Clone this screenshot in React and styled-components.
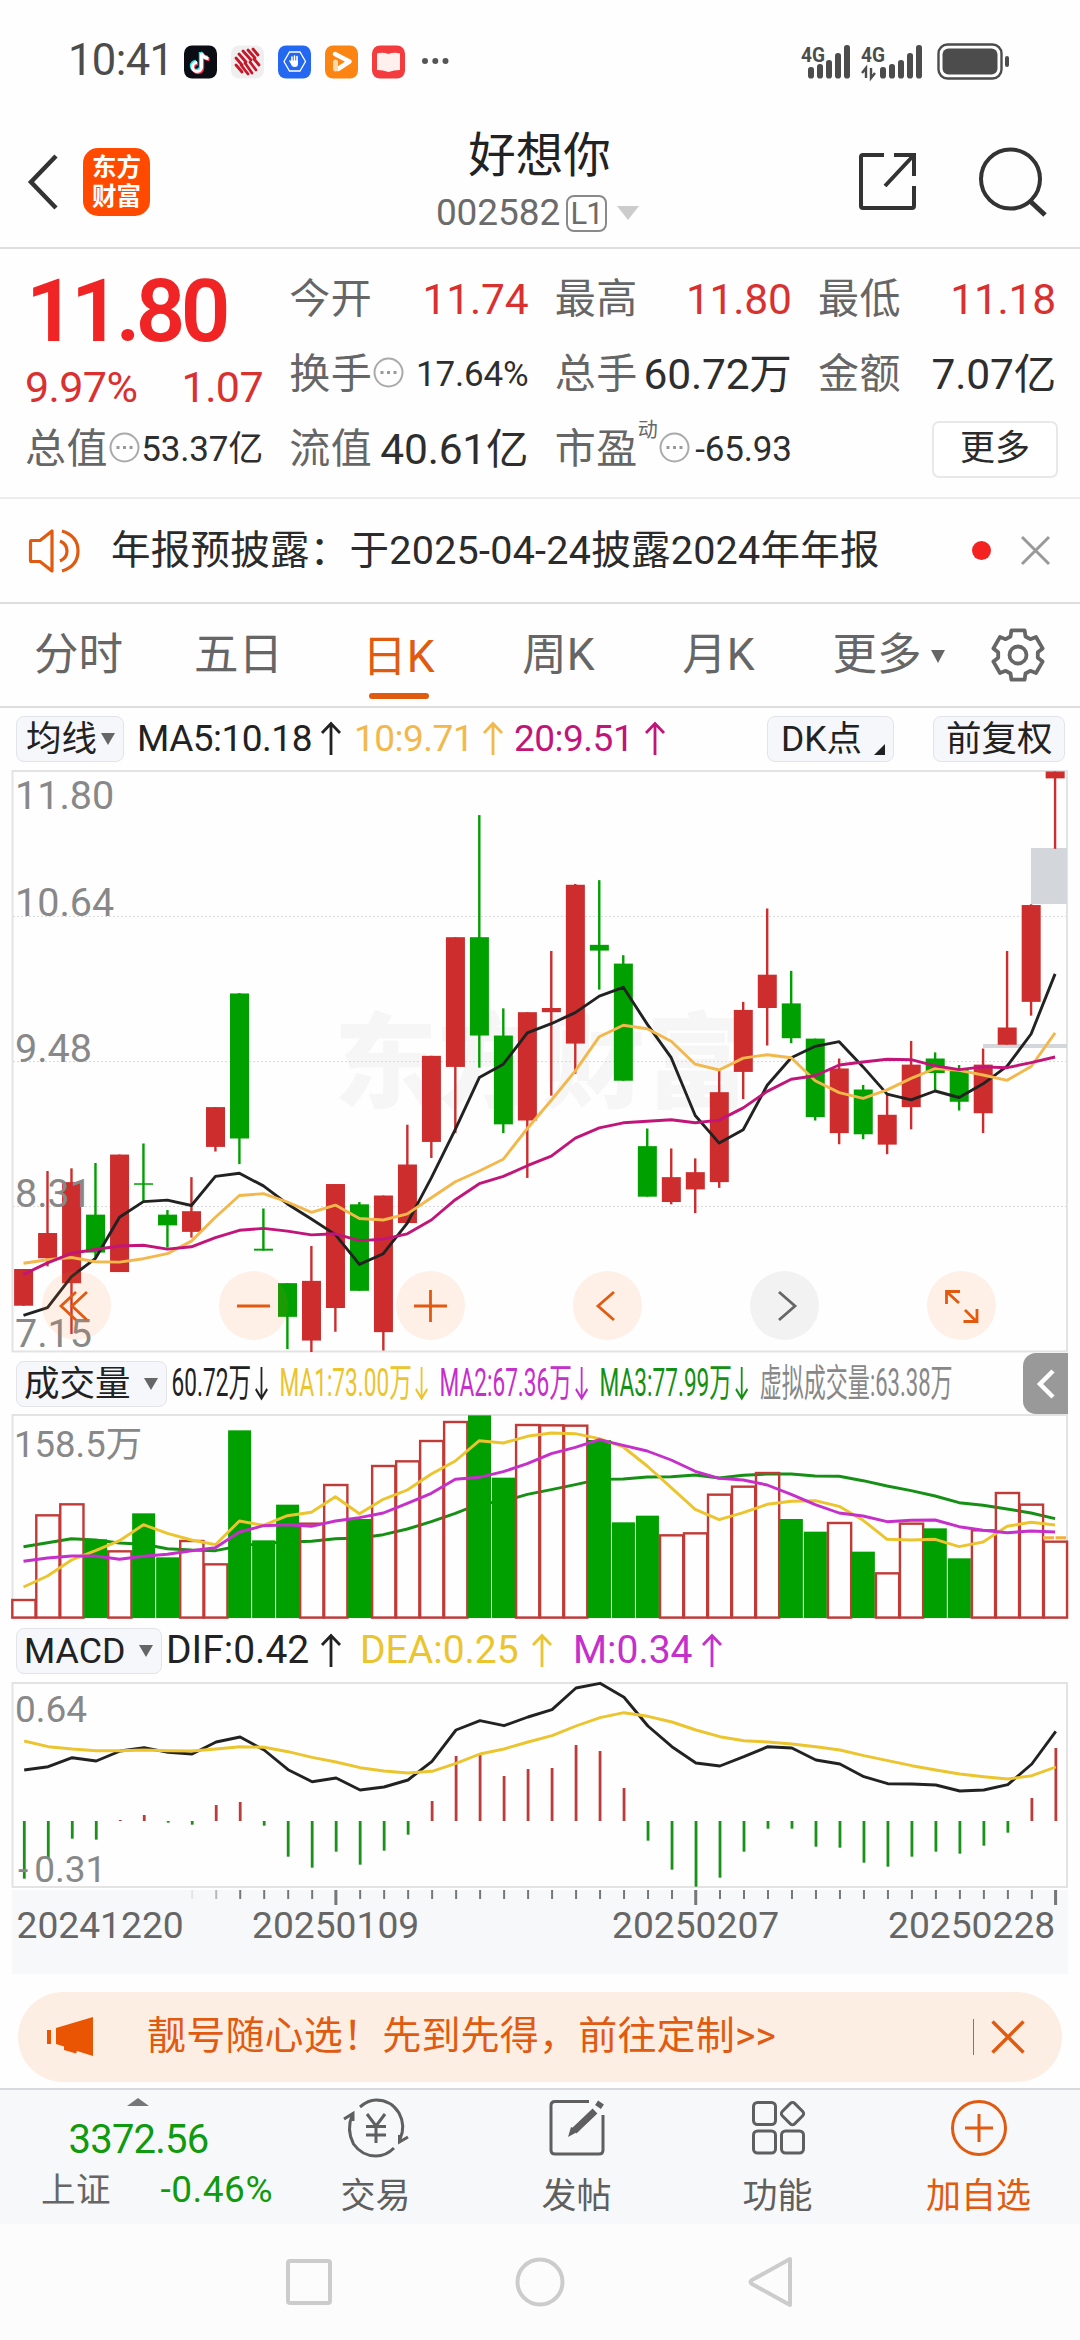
import styled, { createGlobalStyle } from "styled-components";

const GlobalStyle = createGlobalStyle`
    * {
        box-sizing: border-box;
    }
    body {
        margin: 0;
        background: #fefefe;
        font-family: Roboto, "Noto Sans CJK SC", sans-serif;
        line-height: 1.2;
        color: #2b2b2b;
    }
    svg {
        display: block;
        flex-shrink: 0;
        overflow: visible;
    }
`;

const RED = "#cd2d2d";
const GREEN = "#00a000";
const ORANGE = "#e05a10";

// one row per day: [up, high, bodyTop, bodyBottom, low]
const candles = [
    [1, 1330, 1330, 1426, 1426], [1, 1074, 1236, 1302, 1323], [1, 1067, 1103, 1367, 1500], [0, 1053, 1188, 1287, 1302],
    [1, 1031, 1031, 1338, 1338], [0, 1002, 1106, 1109, 1152], [0, 1176, 1188, 1216, 1274], [1, 1090, 1179, 1233, 1248],
    [1, 907, 907, 1011, 1023], [0, 609, 610, 989, 1056], [0, 1172, 1277, 1282, 1282], [0, 1367, 1367, 1455, 1539],
    [1, 1270, 1361, 1517, 1547], [1, 1108, 1108, 1432, 1494], [0, 1155, 1161, 1387, 1387], [1, 1138, 1138, 1495, 1543],
    [1, 953, 1057, 1210, 1210], [1, 773, 773, 998, 1040], [1, 463, 463, 802, 975], [0, 144, 463, 720, 804],
    [0, 649, 720, 952, 975], [1, 659, 659, 942, 1092], [1, 499, 648, 659, 877], [1, 324, 326, 741, 820],
    [0, 314, 483, 498, 600], [0, 510, 532, 838, 838], [0, 963, 1009, 1141, 1141], [1, 1015, 1090, 1155, 1161],
    [1, 1041, 1077, 1122, 1184], [1, 812, 868, 1103, 1118], [1, 632, 653, 815, 886], [1, 388, 561, 648, 746],
    [0, 551, 636, 727, 740], [0, 728, 728, 933, 942], [1, 780, 806, 975, 1004], [0, 849, 861, 978, 991],
    [1, 875, 927, 1005, 1030], [1, 734, 796, 907, 965], [0, 764, 780, 818, 866], [0, 797, 810, 893, 916],
    [1, 754, 796, 923, 975], [1, 499, 699, 744, 744], [1, 377, 379, 632, 668], [1, 30, 30, 48, 232],
];
const ma5 = [1451, 1431, 1350, 1302, 1195, 1154, 1150, 1164, 1088, 1080, 1113, 1160, 1199, 1240, 1318, 1290, 1210, 1092, 965, 830, 795, 713, 689, 660, 617, 594, 690, 778, 929, 1001, 966, 850, 778, 748, 736, 802, 873, 888, 865, 882, 846, 800, 716, 559];
const ma10 = [1315, 1306, 1300, 1311, 1312, 1303, 1290, 1257, 1195, 1138, 1133, 1155, 1182, 1163, 1198, 1202, 1186, 1144, 1102, 1074, 1043, 963, 889, 812, 723, 693, 702, 735, 795, 810, 779, 770, 778, 838, 869, 884, 862, 832, 806, 811, 823, 837, 801, 713];
const ma20 = [1344, 1314, 1289, 1279, 1270, 1268, 1278, 1272, 1248, 1229, 1224, 1231, 1241, 1238, 1256, 1252, 1238, 1202, 1149, 1107, 1088, 1060, 1035, 988, 961, 948, 944, 940, 948, 941, 909, 866, 834, 825, 797, 789, 782, 783, 799, 809, 802, 804, 791, 776];

const volumes = [777, 523, 490, 598, 631, 520, 652, 600, 670, 271, 601, 494, 548, 432, 537, 375, 361, 300, 243, 226, 413, 252, 253, 254, 300, 547, 527, 583, 577, 461, 437, 396, 537, 575, 546, 635, 697, 548, 565, 655, 568, 456, 491, 602];
const vol1 = [741, 708, 660, 632, 602, 554, 580, 600, 614, 543, 556, 527, 517, 470, 521, 478, 450, 402, 363, 302, 309, 289, 279, 281, 296, 321, 378, 443, 508, 539, 518, 493, 484, 482, 499, 541, 598, 600, 598, 620, 606, 559, 547, 555];
const vol2 = [664, 654, 648, 648, 658, 649, 643, 632, 623, 576, 557, 554, 559, 543, 533, 519, 490, 460, 418, 412, 395, 371, 341, 322, 299, 316, 333, 360, 394, 415, 420, 435, 463, 494, 519, 528, 545, 541, 540, 560, 571, 578, 573, 576];
const vol3 = [620, 608, 596, 600, 609, 613, 626, 630, 632, 618, 610, 606, 604, 596, 594, 584, 567, 545, 520, 492, 484, 463, 449, 434, 418, 417, 411, 410, 405, 414, 406, 402, 402, 408, 409, 422, 438, 452, 468, 488, 496, 507, 519, 536];

const macd = [776, 717, 656, 659, 600, 585, 608, 614, 555, 546, 617, 710, 743, 695, 734, 692, 644, 543, 408, 401, 468, 447, 444, 375, 393, 504, 662, 749, 800, 773, 695, 626, 626, 680, 683, 728, 740, 710, 695, 701, 677, 638, 534, 384];
const dif = [450, 440, 413, 423, 393, 383, 397, 402, 366, 351, 390, 449, 485, 474, 510, 501, 480, 424, 330, 302, 317, 291, 269, 204, 190, 232, 318, 380, 429, 438, 410, 380, 384, 420, 432, 470, 491, 492, 495, 513, 510, 494, 432, 334];
const dea = [363, 380, 387, 392, 392, 390, 392, 393, 387, 380, 382, 395, 412, 426, 443, 453, 459, 454, 430, 402, 387, 366, 347, 318, 293, 278, 289, 306, 330, 350, 362, 366, 372, 380, 390, 407, 422, 437, 450, 462, 470, 477, 467, 441];

const STEP = 23.99;
const cx = (i) => 23.5 + i * STEP;
const priceY = (v) => v / 2.613 - 10;
const volY = (v) => v / 3 - 74;
const macdY = (v) => v / 3 - 62;

const Line = ({ data, y, color, dx = 0 }) => (
    <polyline
        points={data.map((v, i) => `${(cx(i) + dx).toFixed(1)},${y(v).toFixed(1)}`).join(" ")}
        fill="none"
        stroke={color}
        strokeWidth="2.9"
        strokeLinejoin="round"
    />
);

const Frame = ({ bottom }) => (
    <rect x="12.5" y="1" width="1054.5" height={bottom - 1} fill="none" stroke="#e3e3e3" strokeWidth="2" />
);

const AxisText = styled.text`
    font-size: ${(p) => p.$size || 39.5}px;
    fill: #888;
`;

const Watermark = styled.text`
    font-size: 103px;
    font-weight: 900;
    fill: #f6f6f6;
    letter-spacing: 1px;
`;

const PriceChart = () => (
    <svg width="1080" height="583" viewBox="0 0 1080 583">
        <Watermark x="334" y="330">东方财富</Watermark>
        {[146.4, 291.6, 436.6].map((y) => (
            <line key={y} x1="13" x2="1067" y1={y} y2={y} stroke="#d8d8d8" strokeWidth="1" strokeDasharray="2 2" />
        ))}
        <Frame bottom={581.5} />
        <rect x="1031" y="78" width="36" height="56" fill="#d3d6db" />
        <rect x="983" y="274" width="84" height="4" fill="#d3d6db" />
        {candles.map(([up, high, top, bottom, low], i) => (
            <g key={i} fill={up ? RED : GREEN}>
                <rect x={cx(i) - 1.2} y={priceY(high)} width="2.4" height={priceY(low) - priceY(high)} />
                <rect x={cx(i) - 9.4} y={priceY(top)} width="19" height={Math.max(priceY(bottom) - priceY(top), 1.5)} />
            </g>
        ))}
        <Line data={ma5} y={priceY} color="#222" />
        <Line data={ma10} y={priceY} color="#f3b84c" />
        <Line data={ma20} y={priceY} color="#c2157a" />
        <AxisText x="15" y="39">11.80</AxisText>
        <AxisText x="15" y="146">10.64</AxisText>
        <AxisText x="15" y="292">9.48</AxisText>
        <AxisText x="15" y="437">8.31</AxisText>
        <AxisText x="15" y="577">7.15</AxisText>
    </svg>
);

const VolumeChart = () => (
    <svg width="1080" height="205" viewBox="0 0 1080 205">
        <Frame bottom={203.5} />
        <Line data={vol3} y={volY} color="#159015" />
        {volumes.map((v, i) =>
            candles[i][0] ? (
                <rect key={i} x={cx(i) - 11.2} y={volY(v) + 1} width="23.2" height={202.6 - volY(v)} fill="none" stroke="#c03a38" strokeWidth="2.4" />
            ) : (
                <rect key={i} x={cx(i) - 11.3} y={volY(v)} width="23" height={204 - volY(v)} fill={GREEN} />
            )
        )}
        <line x1="1043" x2="1066" y1="123.7" y2="123.7" stroke="#f3b03c" strokeWidth="3" strokeDasharray="11 1.5" />
        <Line data={vol1} y={volY} color="#ebc42e" />
        <Line data={vol2} y={volY} color="#c52fca" />
        <AxisText x="14" y="43" $size={36.5}>158.5万</AxisText>
    </svg>
);

const MacdChart = () => (
    <svg width="1080" height="206" viewBox="0 0 1080 206">
        <Frame bottom={205} />
        {macd.map((v, i) => (
            <line key={i} x1={cx(i) + 0.8} x2={cx(i) + 0.8} y1={macdY(603)} y2={macdY(v)} stroke={v < 603 ? "#bb3c3a" : "#1a911a"} strokeWidth="2.8" />
        ))}
        <Line data={dif} y={macdY} color="#222" dx={0.7} />
        <Line data={dea} y={macdY} color="#ebc42e" dx={0.7} />
        <AxisText x="15" y="39.5" $size={37}>0.64</AxisText>
        <AxisText x="18" y="200" $size={37}>-<tspan dx="6">0.31</tspan></AxisText>
    </svg>
);

const DateText = styled(AxisText)`
    fill: #666;
`;

const DateAxis = () => (
    <svg width="1080" height="87" viewBox="0 0 1080 87">
        <rect x="12" y="2" width="1056" height="84" fill="#f7f8fa" />
        {candles.map((c, i) => {
            const major = i === 13 || i === 28 || i === 43;
            return i < 7 ? null : (
                <rect key={i} x={cx(i) - (major ? 1 : 0.2)} y="2" width={major ? 3 : 2} height={major ? 15 : 9} fill="#777" opacity={i === 7 ? 0.15 : i === 8 ? 0.5 : 1} />
            );
        })}
        <DateText x="16.500" y="50" $size={37.2}>20241220</DateText>
        <DateText x="252" y="50" $size={37.2}>20250109</DateText>
        <DateText x="612" y="50" $size={37.2}>20250207</DateText>
        <DateText x="888" y="50" $size={37.2}>20250228</DateText>
    </svg>
);

const Arrow = ({ down, w = 20 }) => (
    <svg width={w} height="33" viewBox="0 0 20 33" preserveAspectRatio="none">
        <path d={down ? "M10 0V31M1 22L10 31.5L19 22" : "M10 33V2M1 11L10 1.5L19 11"} fill="none" stroke="currentColor" strokeWidth="2.8" />
    </svg>
);

const Triangle = styled.i`
    border-left: ${(p) => p.$w / 2}px solid transparent;
    border-right: ${(p) => p.$w / 2}px solid transparent;
    border-top: ${(p) => p.$h}px solid ${(p) => p.$color || "#666"};
`;

const Page = styled.div`
    width: 1080px;
    height: 2340px;
    overflow: hidden;
    display: flex;
    flex-direction: column;
`;

const StatusBar = styled.div`
    height: 123px;
    padding: 0 70px 0 68px;
    display: flex;
    align-items: center;
    justify-content: space-between;
    color: #4c4c4c;
`;

const Clock = styled.span`
    width: 116px;
    font-size: 43.5px;
    letter-spacing: -0.6px;
`;

const StatusIcons = styled.div`
    display: flex;
    align-items: center;
`;

const AppIcon = ({ children, bg }) => (
    <svg width="47" height="34" viewBox="0 0 47 34">
        <rect width="33" height="33" y="0.5" rx="8" fill={bg} />
        {children}
    </svg>
);

const note = "M17.5 8v14a4.5 4.5 0 1 1-4.5-4.5M17.5 8c1 4 3.5 5 7 5.5";

const Signal = ({ data }) => (
    <svg width="61" height="36" viewBox="0 0 61 36">
        <text x={data ? 0 : 1} y="17.5" fontSize="21" fontWeight="700" fill="currentColor" textLength="24" lengthAdjust="spacingAndGlyphs">4G</text>
        {[[23, 24], [20, 33], [16, 42], [9, 51], [1, 60]].map(([y, x]) => (
            <rect key={x} x={x - (data ? 5 : 16)} y={y} width="6" height={34.5 - y} rx="2.8" fill="currentColor" />
        ))}
        {data && <path d="M1 29l4-5v10M10 24v10l4-5" fill="none" stroke="currentColor" strokeWidth="2.4" />}
    </svg>
);

const Header = styled.header`
    height: 126px;
    padding: 0 33px 9px 28px;
    display: grid;
    grid-template-columns: 1fr 208px 1fr;
    align-items: center;
    border-bottom: 2px solid #dedede;
`;

const HeaderSide = styled.div`
    display: flex;
    align-items: center;
    justify-content: ${(p) => (p.$end ? "flex-end" : "flex-start")};
    gap: ${(p) => (p.$end ? 61 : 25)}px;
`;

const Logo = styled.div`
    width: 67px;
    height: 68px;
    padding-top: 5px;
    border-radius: 15px;
    background: #ff4a00;
    color: #fff;
    font-size: 24.5px;
    font-weight: 700;
    line-height: 29px;
    text-align: center;
`;

const Titles = styled.div`
    display: flex;
    flex-direction: column;
    align-items: center;
`;

const StockName = styled.div`
    padding: 5px 0 0 4px;
    font-size: 47.5px;
    line-height: 56px;
    color: #222;
`;

const StockCode = styled.div`
    display: flex;
    align-items: center;
    height: 57px;
    padding-top: 1px;
    font-size: 37px;
    color: #6b6b6b;
    letter-spacing: -0.1px;
`;

const Level = styled.span`
    width: 41px;
    height: 37px;
    margin: 0 10px 0 6px;
    border: 2px solid #8a8a8a;
    border-radius: 8px;
    font-size: 31px;
    line-height: 34px;
    text-align: center;
    letter-spacing: -1px;
`;

const Quote = styled.section`
    height: 250px;
    padding: 13px 24px 0 25px;
    display: grid;
    grid-template-columns: 238px 239px 237px 238px;
    grid-template-rows: repeat(3, 75px);
    justify-content: space-between;
    border-bottom: 2px solid #ededed;
`;

const PriceBlock = styled.div`
    grid-row: span 2;
    color: #f02424;
`;

const Price = styled.div`
    height: 100px;
    padding-left: 1px;
    font-size: 87px;
    font-weight: 600;
    line-height: 99px;
    letter-spacing: -4.8px;
`;

const Change = styled.div`
    display: flex;
    justify-content: space-between;
    color: #d93030;
    font-size: 43px;
    line-height: 50px;
    letter-spacing: -0.6px;
`;

const Cell = styled.div`
    display: flex;
    align-items: center;
    justify-content: space-between;
    white-space: nowrap;
`;

const CellLabel = styled.span`
    display: flex;
    align-items: center;
    font-size: 41px;
    color: #666;
    letter-spacing: 0.5px;
`;

const CellValue = styled.span`
    font-size: ${(p) => (p.$small ? 35 : 42.5)}px;
    letter-spacing: -0.2px;
    color: ${(p) => (p.$up ? "#d93030" : "#2e2e2e")};
`;

const Sup = styled.sup`
    align-self: flex-start;
    margin-top: -5px;
    font-size: 20px;
    line-height: 20px;
`;

const MoreButton = styled.button`
    justify-self: end;
    align-self: center;
    width: 126px;
    height: 57px;
    margin: 0 -2px 0 0;
    padding: 0 0 2px;
    border: 2px solid #e8e8e8;
    border-radius: 7px;
    background: #fff;
    color: #2b2b2b;
    font-family: inherit;
    font-size: 35px;
    line-height: 50px;
`;

const Info = () => (
    <svg width="33" height="34" viewBox="0 0 33 34">
        <circle cx="16.5" cy="14.5" r="14" fill="none" stroke="#aaa" strokeWidth="2" />
        <path d="M8.5 14.5h3M15 14.5h3M21.5 14.5h3" stroke="#999" strokeWidth="3" />
    </svg>
);

const Notice = styled.section`
    height: 105px;
    padding: 0 30px 0 28px;
    display: flex;
    align-items: center;
    border-bottom: 2px solid #dedede;
`;

const NoticeText = styled.span`
    flex: 1;
    margin-left: 30px;
    font-size: 39.5px;
    letter-spacing: 0.25px;
    white-space: nowrap;
`;

const Dot = styled.i`
    width: 19px;
    height: 19px;
    margin-right: 30px;
    border-radius: 50%;
    background: #f52222;
`;

const Tabs = styled.nav`
    height: 104px;
    display: grid;
    grid-template-columns: repeat(5, 160px) 180px 76px;
    border-bottom: 2px solid #dedede;
`;

const Tab = styled.div`
    display: flex;
    align-items: center;
    justify-content: center;
    gap: 9px;
    padding: 2px 3px 0 0;
    font-size: 44.5px;
    color: ${(p) => (p.$active ? ORANGE : "#666")};
`;

const ActiveTab = styled(Tab)`
    flex-direction: column;
    gap: 0;
    padding-top: 29px;
    justify-content: flex-start;
    line-height: 48px;

    &::after {
        content: "";
        width: 60px;
        height: 6px;
        margin-top: 12px;
        border-radius: 3px;
        background: ${ORANGE};
    }
`;

const GearTab = styled(Tab)`
    padding: 0;
`;

const IndicatorRow = styled.div`
    height: ${(p) => p.$h}px;
    padding-left: 16px;
    display: flex;
    align-items: center;
    flex-shrink: 0;
    white-space: nowrap;
`;

const Pill = styled.div`
    width: ${(p) => p.$w}px;
    height: 46px;
    margin-left: ${(p) => p.$ml || 0}px;
    padding: 0 8px 0 ${(p) => p.$pl || 7}px;
    display: flex;
    align-items: center;
    justify-content: space-between;
    flex-shrink: 0;
    border: 1.5px solid #e2e4ea;
    border-radius: 8px;
    background: #f6f7fa;
    font-size: ${(p) => p.$size || 35.5}px;
    line-height: 44px;
    color: #222;
`;

const Corner = styled.i`
    align-self: flex-end;
    margin-bottom: 6px;
    border-left: 11px solid transparent;
    border-bottom: 11px solid #222;
`;

const Value = styled.span`
    width: ${(p) => p.$w}px;
    margin-left: ${(p) => p.$ml || 0}px;
    display: flex;
    align-items: center;
    justify-content: space-between;
    flex-shrink: 0;
    color: ${(p) => p.$color};
    font-size: ${(p) => p.$size || 37}px;
    letter-spacing: ${(p) => p.$ls || 0}px;
`;

// volume figures are condensed so that all five fit on one line
const Condensed = styled.div`
    width: 852px;
    margin-left: 4px;
    display: flex;
    align-items: center;
    transform: scaleX(0.58);
    transform-origin: left center;
`;

const Collapse = styled.div`
    width: 45px;
    height: 61px;
    display: flex;
    align-items: center;
    justify-content: center;
    border-radius: 13px 0 0 13px;
    background: #999;
`;

const ChartArea = styled.div`
    position: relative;
`;

const Controls = styled.div`
    position: absolute;
    left: 42px;
    bottom: 13px;
    display: flex;
    gap: 108px;
`;

const Control = styled.div`
    width: 69px;
    height: 69px;
    border-radius: 50%;
    display: flex;
    align-items: center;
    justify-content: center;
    background: ${(p) => (p.$off ? "rgba(120, 120, 120, 0.09)" : "rgba(255, 120, 50, 0.11)")};
    color: ${(p) => (p.$off ? "#666" : ORANGE)};
`;

const controlPaths = [
    "M17 4L2 18L17 32M28 4L13 18L28 32",
    "M1 18H34",
    "M1 18H34M17.5 2V34",
    "M24 4L8 18L24 32",
    "M12 4L28 18L12 32",
    "M2.5 16V3.500H16M3 4L15 15M33 21V33.500H19.500M32 33L21 22",
];

const BannerWrap = styled.div`
    height: 113px;
    padding: 17px 18px 0;
`;

const Banner = styled.div`
    height: 90px;
    padding: 0 37px 0 28px;
    display: flex;
    align-items: center;
    border-radius: 45px;
    background: #fdeee4;
    color: ${ORANGE};
    font-size: 39px;
`;

const BannerText = styled.span`
    flex: 1;
    margin-left: 52px;
    padding-bottom: 1px;
    letter-spacing: 0.2px;
    white-space: nowrap;
`;

const Divider = styled.i`
    width: 1.5px;
    height: 36px;
    margin-right: 17px;
    background: ${ORANGE};
`;

const BottomBar = styled.footer`
    height: 136px;
    display: grid;
    grid-template-columns: 275px repeat(4, 201px);
    border-top: 2px solid #d6d9dd;
    background: #f7f8fa;
`;

const IndexBlock = styled.div`
    display: flex;
    flex-direction: column;
    align-items: center;
    padding-top: 8px;
    color: #0f9a0f;
`;

const IndexValue = styled.div`
    margin-top: 11px;
    padding-left: 2px;
    font-size: 40px;
    line-height: 46px;
    letter-spacing: -0.8px;
`;

const IndexRow = styled.div`
    width: 232px;
    display: flex;
    justify-content: space-between;
    margin: 1px 0 0 39px;
    font-size: 37px;
    line-height: 52px;
    letter-spacing: 0.5px;

    span:first-child {
        color: #666;
        font-size: 34.5px;
    }
`;

const BarItem = styled.div`
    display: flex;
    flex-direction: column;
    align-items: center;
    padding-top: 7px;
    font-size: 35px;
    line-height: 52px;
    color: ${(p) => (p.$active ? ORANGE : "#5f5f5f")};

    svg {
        margin-bottom: 12px;
    }
`;

const SystemNav = styled.div`
    height: 116px;
    padding: 0 286px;
    display: flex;
    align-items: center;
    justify-content: space-between;
    background: #fcfcfc;
`;

const BarIcon = ({ children }) => (
    <svg width="68" height="62" viewBox="0 0 68 62" fill="none" stroke="currentColor" strokeWidth="3">
        {children}
    </svg>
);

// six-tooth outline of the chart settings button
const gearPoints = Array.from({ length: 6 }, (_, k) =>
    [[-15, 25.5], [15, 25.5], [22, 20], [38, 20]]
        .map(([a, r]) => {
            const t = ((k * 60 - 90 + a) * Math.PI) / 180;
            return `${(27 + r * Math.cos(t)).toFixed(1)},${(27 + r * Math.sin(t)).toFixed(1)}`;
        })
        .join(" ")
).join(" ");

const App = () => (
    <Page>
        <GlobalStyle />
        <StatusBar>
            <StatusIcons>
                <Clock>10:41</Clock>
                <AppIcon bg="#0b0c14">
                    <path d={note} transform="translate(-1 -1)" fill="none" stroke="#25e4e0" strokeWidth="3.4" />
                    <path d={note} transform="translate(1 1)" fill="none" stroke="#f8385a" strokeWidth="3.4" />
                    <path d={note} fill="none" stroke="#fff" strokeWidth="3.2" />
                </AppIcon>
                <AppIcon bg="#efefef">
                    <path d="M5 13l6 7M8 9l7 8M12 6l8 9M17 5l7 8M22 4l5 6M5 20l6 7M10 20l7 9M14 18l7 10M19 17l6 8M23 14l5 6" stroke="#c4182a" strokeWidth="2.8" strokeLinecap="round" />
                </AppIcon>
                <AppIcon bg="#2468f2">
                    <path d="M11.5 7h10.500l5.500 9.500l-5.500 9.500h-10.500l-5.500-9.500z" fill="none" stroke="#fff" strokeWidth="1.3" />
                    <path d="M14 16v-4M16.500 16v-5M19 16v-4.500M12 16l2 3" stroke="#fff" strokeWidth="1.6" strokeLinecap="round" />
                    <path d="M13 15.500h7v3q0 3.500-3.200 3.500t-3.800-3z" fill="#fff" />
                </AppIcon>
                <AppIcon bg="#fb8412">
                    <path d="M10 9l14.500 7.500L13 24" fill="none" stroke="#fff" strokeWidth="4.5" strokeLinecap="round" strokeLinejoin="round" />
                    <path d="M10.500 17v7" stroke="#ffd9a8" strokeWidth="5" strokeLinecap="round" />
                </AppIcon>
                <AppIcon bg="#f43b3d">
                    <path d="M5 8.500q6-1.500 11.500 0.500q5.500-2 11.500-0.500v16.500q-6 0-11.500 2q-5.500-2-11.500-2z" fill="#fff0ee" />
                </AppIcon>
                <svg width="34" height="10" viewBox="0 0 34 10" fill="#555">
                    <circle cx="6" cy="4" r="3" />
                    <circle cx="16.3" cy="4" r="3" />
                    <circle cx="26.5" cy="4" r="3" />
                </svg>
            </StatusIcons>
            <StatusIcons>
                <Signal />
                <Signal data />
                <svg width="88" height="38" viewBox="0 0 88 38">
                    <rect x="16.5" y="1.5" width="63" height="34" rx="9" fill="none" stroke="currentColor" strokeWidth="2.4" />
                    <rect x="20.5" y="5.5" width="55" height="26" rx="6" fill="currentColor" />
                    <rect x="83" y="13" width="4" height="11" rx="2" fill="currentColor" />
                </svg>
            </StatusIcons>
        </StatusBar>

        <Header>
            <HeaderSide>
                <svg width="30" height="56" viewBox="0 0 30 56">
                    <path d="M28 2L3 28L28 54" fill="none" stroke="#333" strokeWidth="4.5" />
                </svg>
                <Logo>东方<br />财富</Logo>
            </HeaderSide>
            <Titles>
                <StockName>好想你</StockName>
                <StockCode>
                    002582
                    <Level>L1</Level>
                    <Triangle $w={22} $h={14} $color="#ccc" />
                </StockCode>
            </Titles>
            <HeaderSide $end>
                <svg width="60" height="60" viewBox="0 0 60 60" fill="none" stroke="#333" strokeWidth="4">
                    <path d="M26 3H5Q3 3 3 5V54Q3 56 5 56H54Q56 56 56 54V34M36 3H56V24M55 4L27 34" />
                </svg>
                <svg width="68" height="69" viewBox="0 0 68 69" fill="none" stroke="#333" strokeWidth="4">
                    <circle cx="31.5" cy="31" r="29.5" />
                    <path d="M51 53L66 67" strokeWidth="5" />
                </svg>
            </HeaderSide>
        </Header>

        <Quote>
            <PriceBlock>
                <Price>11.80</Price>
                <Change><span>9.97%</span><span>1.07</span></Change>
            </PriceBlock>
            <Cell><CellLabel>今开</CellLabel><CellValue $up>11.74</CellValue></Cell>
            <Cell><CellLabel>最高</CellLabel><CellValue $up>11.80</CellValue></Cell>
            <Cell><CellLabel>最低</CellLabel><CellValue $up>11.18</CellValue></Cell>
            <Cell><CellLabel>换手<Info /></CellLabel><CellValue $small>17.64%</CellValue></Cell>
            <Cell><CellLabel>总手</CellLabel><CellValue>60.72万</CellValue></Cell>
            <Cell><CellLabel>金额</CellLabel><CellValue>7.07亿</CellValue></Cell>
            <Cell><CellLabel>总值<Info /></CellLabel><CellValue $small>53.37亿</CellValue></Cell>
            <Cell><CellLabel>流值</CellLabel><CellValue>40.61亿</CellValue></Cell>
            <Cell><CellLabel>市盈<Sup>动</Sup><Info /></CellLabel><CellValue $small>-65.93</CellValue></Cell>
            <MoreButton>更多</MoreButton>
        </Quote>

        <Notice>
            <svg width="53" height="46" viewBox="0 0 53 46" fill="none" stroke={ORANGE} strokeWidth="3.2">
                <path d="M3 12.500H12L24 3V43L12 33.500H3Q2.500 33.500 2.500 32V14Q2.500 12.500 3 12.500Z" strokeLinejoin="round" />
                <path d="M32 13Q39 16 39 23Q39 30 32 33M34 3Q50 8 50 23Q50 38 34 43" />
            </svg>
            <NoticeText>年报预披露：于2025-04-24披露2024年年报</NoticeText>
            <Dot />
            <svg width="29" height="29" viewBox="0 0 29 29">
                <path d="M1 1L28 28M28 1L1 28" stroke="#999" strokeWidth="3" />
            </svg>
        </Notice>

        <Tabs>
            <Tab>分时</Tab>
            <Tab>五日</Tab>
            <ActiveTab $active>日K</ActiveTab>
            <Tab>周K</Tab>
            <Tab>月K</Tab>
            <Tab>更多<Triangle $w={15} $h={13} /></Tab>
            <GearTab>
                <svg width="54" height="54" viewBox="0 0 54 54" fill="none" stroke="#666" strokeWidth="3.8">
                    <polygon points={gearPoints} strokeLinejoin="round" />
                    <circle cx="27" cy="27" r="8.5" />
                </svg>
            </GearTab>
        </Tabs>

        <IndicatorRow $h={62}>
            <Pill $w={108} $pl={9}>均线<Triangle $w={14} $h={12} /></Pill>
            <Value $color="#222" $w={204} $ml={13} $ls={-0.5}>MA5:10.18<Arrow /></Value>
            <Value $color="#f3b84c" $w={149} $ml={13} $ls={-0.5}>10:9.71<Arrow /></Value>
            <Value $color="#c2157a" $w={151} $ml={11} $ls={-0.5}>20:9.51<Arrow /></Value>
            <Pill $w={127} $ml={102} $pl={13}>DK点<Corner /></Pill>
            <Pill $w={132} $ml={39} $pl={12}>前复权</Pill>
        </IndicatorRow>

        <ChartArea>
            <PriceChart />
            <Controls>
                {controlPaths.map((d, i) => (
                    <Control key={d} $off={i === 4}>
                        <svg width="36" height="36" viewBox="0 0 36 36">
                            <path d={d} fill="none" stroke="currentColor" strokeWidth="2.8" />
                        </svg>
                    </Control>
                ))}
            </Controls>
        </ChartArea>

        <IndicatorRow $h={61}>
            <Pill $w={151}>成交量<Triangle $w={15} $h={12} /></Pill>
            <Condensed>
                <Value $color="#222" $w={166} $ml={1} $size={39}>60.72万<Arrow down w={22} /></Value>
                <Value $color="#ebc42e" $w={256} $ml={20} $size={39}>MA1:73.00万<Arrow down w={22} /></Value>
                <Value $color="#c52fca" $w={256} $ml={20} $size={39}>MA2:67.36万<Arrow down w={22} /></Value>
                <Value $color="#159015" $w={256} $ml={20} $size={39}>MA3:77.99万<Arrow down w={22} /></Value>
                <Value $color="#888" $w={340} $ml={20} $size={38}>虚拟成交量:63.38万</Value>
            </Condensed>
            <Collapse>
                <svg width="18" height="30" viewBox="0 0 18 30">
                    <path d="M16 2L3 15L16 28" fill="none" stroke="#fff" strokeWidth="4.5" />
                </svg>
            </Collapse>
        </IndicatorRow>
        <VolumeChart />

        <IndicatorRow $h={63}>
            <Pill $w={146} $size={35.8}>MACD<Triangle $w={15} $h={12} /></Pill>
            <Value $color="#222" $w={175} $ml={4} $size={39}>DIF:0.42<Arrow /></Value>
            <Value $color="#ebc42e" $w={192} $ml={19} $size={39}>DEA:0.25<Arrow /></Value>
            <Value $color="#c52fca" $w={149} $ml={21} $size={39}>M:0.34<Arrow /></Value>
        </IndicatorRow>
        <MacdChart />
        <DateAxis />

        <BannerWrap>
            <Banner>
                <svg width="49" height="40" viewBox="0 0 49 40" fill="#ea5504">
                    <path d="M1 13h4v14h-4zM10 11L47 0V39L31 34L30 36.500L18 33V29.500L10 27Z" />
                </svg>
                <BannerText>靓号随心选！先到先得，前往定制&gt;&gt;</BannerText>
                <Divider />
                <svg width="34" height="34" viewBox="0 0 34 34">
                    <path d="M1.500 1.500L32.500 32.500M32.500 1.500L1.500 32.500" stroke={ORANGE} strokeWidth="3.4" />
                </svg>
            </Banner>
        </BannerWrap>

        <BottomBar>
            <IndexBlock>
                <svg width="22" height="8" viewBox="0 0 22 8"><path d="M0 8L11 0L22 8Z" fill="#777" /></svg>
                <IndexValue>3372.56</IndexValue>
                <IndexRow><span>上证</span><span>-0.46%</span></IndexRow>
            </IndexBlock>
            <BarItem>
                <BarIcon>
                    <path d="M18 10Q26 3 34 3Q49 3 57 16Q64 29 58 42M52 51Q44 59 34 59Q20 59 11.500 47Q4 33 10.500 17M2 22L11 16.500V24M66 40L57.500 45V38M25 17L34 29L43 17M34 29V46M24 29.500H44M24 38H44" />
                </BarIcon>
                交易
            </BarItem>
            <BarItem>
                <BarIcon>
                    <path d="M46 4.500H12Q8 4.500 8 8.500V53Q8 57 12 57H56Q60 57 60 53V18" />
                    <path d="M55 10L58 5.500M31 34L52 14" strokeWidth="7" />
                    <path d="M25 40L28 30L36 34Z" fill="currentColor" stroke="none" />
                </BarIcon>
                发帖
            </BarItem>
            <BarItem>
                <BarIcon>
                    <rect x="9.5" y="5.5" width="22" height="22" rx="4" />
                    <rect x="9.5" y="34" width="22" height="22" rx="4" />
                    <rect x="37.5" y="34" width="22" height="22" rx="4" />
                    <rect x="39.8" y="7.8" width="17.5" height="17.5" rx="3" transform="rotate(45 48.500 16.500)" />
                </BarIcon>
                功能
            </BarItem>
            <BarItem $active>
                <BarIcon>
                    <circle cx="34" cy="31" r="26.5" />
                    <path d="M20 31H48M34 17V45" />
                </BarIcon>
                加自选
            </BarItem>
        </BottomBar>

        <SystemNav>
            <svg width="46" height="46" viewBox="0 0 46 46"><rect x="2" y="2" width="42" height="42" rx="2" fill="none" stroke="#ccc" strokeWidth="4" /></svg>
            <svg width="50" height="50" viewBox="0 0 50 50"><circle cx="25" cy="25" r="22.5" fill="none" stroke="#ccc" strokeWidth="4" /></svg>
            <svg width="46" height="52" viewBox="0 0 46 52"><path d="M42 3V49L4 28Q1 26 4 24Z" fill="none" stroke="#ccc" strokeWidth="4" strokeLinejoin="round" /></svg>
        </SystemNav>
    </Page>
);

export default App;
